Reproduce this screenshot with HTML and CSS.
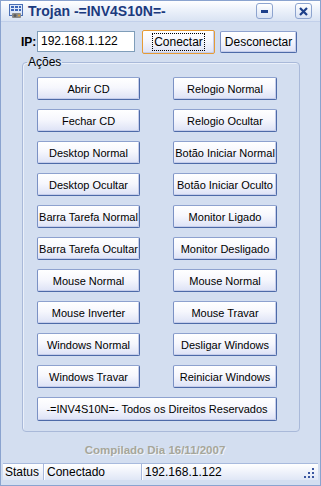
FILE: index.html
```html
<!DOCTYPE html>
<html lang="pt">
<head>
    <meta charset="UTF-8">
    <title>Trojan -=INV4S10N=-</title>
    <link rel="stylesheet" href="styles.css">
</head>
<body>
    <div class="window">
        <div class="titlebar">
            <svg class="app-icon" width="15" height="15" viewBox="0 0 15 15">
                <rect x="0.5" y="0.5" width="13" height="11" fill="#dfe8f8" stroke="#4a6fb5"/>
                <rect x="2" y="2" width="3" height="2" fill="#3d66b8"/>
                <rect x="6" y="2" width="3" height="2" fill="#3d66b8"/>
                <rect x="10" y="2" width="2" height="2" fill="#3d66b8"/>
                <rect x="2" y="5" width="3" height="2" fill="#3d66b8"/>
                <rect x="6" y="5" width="3" height="2" fill="#3d66b8"/>
                <rect x="10" y="5" width="2" height="2" fill="#3d66b8"/>
                <rect x="3" y="9" width="9" height="5" rx="1" fill="#8a8a8a"/>
                <circle cx="6" cy="11.5" r="1.5" fill="#5a5a5a"/>
                <circle cx="10" cy="11.5" r="1" fill="#e0a030"/>
            </svg>
            <span class="title">Trojan -=INV4S10N=-</span>
            <div class="title-buttons">
                <div class="tbtn"><svg width="8" height="8" viewBox="0 0 8 8"><rect x="0" y="3" width="7" height="3" fill="#1d3f8a"/></svg></div>
                <div class="tbtn"><svg width="9" height="9" viewBox="0 0 9 9"><path d="M1 1 L8 8 M8 1 L1 8" stroke="#1d3f8a" stroke-width="2.2"/></svg></div>
            </div>
        </div>

        <div class="content">
            <div class="ip-row">
                <span class="ip-label">IP:</span>
                <div class="ip-input">192.168.1.122</div>
                <button class="btn btn-focus"><span class="focus-rect">Conectar</span></button>
                <button class="btn btn-disc">Desconectar</button>
            </div>

            <fieldset class="group">
                <legend>Ações</legend>
                <div class="actions">
                    <button class="btn">Abrir CD</button>
                    <button class="btn">Relogio Normal</button>
                    <button class="btn">Fechar CD</button>
                    <button class="btn">Relogio Ocultar</button>
                    <button class="btn">Desktop Normal</button>
                    <button class="btn">Botão Iniciar Normal</button>
                    <button class="btn">Desktop Ocultar</button>
                    <button class="btn">Botão Iniciar Oculto</button>
                    <button class="btn">Barra Tarefa Normal</button>
                    <button class="btn">Monitor Ligado</button>
                    <button class="btn">Barra Tarefa Ocultar</button>
                    <button class="btn">Monitor Desligado</button>
                    <button class="btn">Mouse Normal</button>
                    <button class="btn">Mouse Normal</button>
                    <button class="btn">Mouse Inverter</button>
                    <button class="btn">Mouse Travar</button>
                    <button class="btn">Windows Normal</button>
                    <button class="btn">Desligar Windows</button>
                    <button class="btn">Windows Travar</button>
                    <button class="btn">Reiniciar Windows</button>
                </div>
                <button class="btn btn-wide">-=INV4S10N=- Todos os Direitos Reservados</button>
            </fieldset>

            <div class="compiled">Compilado Dia 16/11/2007</div>
        </div>

        <div class="statusbar">
            <div class="panel panel-status">Status</div>
            <div class="panel panel-conn">Conectado</div>
            <div class="panel panel-ip">192.168.1.122</div>
            <svg class="grip" width="11" height="11" viewBox="0 0 11 11">
                <rect x="8" y="0" width="2" height="2" fill="#3a56a0"/>
                <rect x="4" y="4" width="2" height="2" fill="#3a56a0"/>
                <rect x="8" y="4" width="2" height="2" fill="#3a56a0"/>
                <rect x="0" y="8" width="2" height="2" fill="#3a56a0"/>
                <rect x="4" y="8" width="2" height="2" fill="#3a56a0"/>
                <rect x="8" y="8" width="2" height="2" fill="#3a56a0"/>
            </svg>
        </div>
    </div>
</body>
</html>
```

FILE: styles.css
```css
body {
    margin: 0;
    font-family: "Liberation Sans", Arial, sans-serif;
    font-size: 11px;
    color: #000;
}
.window {
    width: 321px;
    height: 486px;
    box-sizing: border-box;
    border: 1px solid #8aa3cf;
    background-color: #d3def0;
    display: flex;
    flex-direction: column;
}
.titlebar {
    height: 20px;
    display: flex;
    align-items: center;
    padding-left: 8px;
    background: linear-gradient(to bottom, #ffffff 0%, #eef3fb 40%, #d9e3f3 100%);
    border-bottom: 1px solid #c2d0ea;
}
.app-icon {
    margin-right: 4px;
}
.title {
    font-weight: bold;
    font-size: 14px;
    color: #1b3a7e;
    flex: 1;
}
.title-buttons {
    display: flex;
    gap: 22px;
    margin-right: 8px;
}
.tbtn {
    width: 15px;
    height: 14px;
    border: 1px solid #8da4cf;
    border-radius: 3px;
    background: linear-gradient(to bottom, #ffffff, #d8e2f4);
    display: flex;
    align-items: center;
    justify-content: center;
}
.content {
    flex: 1;
    padding: 8px 0 0 20px;
}
.ip-row {
    display: flex;
    align-items: center;
    height: 23px;
}
.ip-label {
    font-weight: bold;
    font-size: 12px;
    width: 16px;
}
.ip-input {
    width: 93px;
    height: 19px;
    line-height: 19px;
    padding-left: 3px;
    background: #fff;
    border: 1px solid #7f9db9;
    font-size: 12px;
    margin-right: 7px;
}
.btn {
    font-family: "Liberation Sans", Arial, sans-serif;
    font-size: 11px;
    color: #000;
    height: 23px;
    padding: 0;
    border: 1px solid #4d6aa8;
    border-top-color: #8ea2cf;
    border-left-color: #7b91c4;
    border-radius: 2px;
    background: linear-gradient(to bottom, #ffffff 0%, #f6f7fd 45%, #dde2f6 100%);
    box-shadow: inset -1px -1px 0 #c5cdea;
}
.btn-focus {
    width: 73px;
    height: 24px;
    border: 1px solid #e69b35;
    margin-right: 5px;
    display: flex;
    align-items: center;
    justify-content: center;
}
.focus-rect {
    border: 1px dotted #000;
    padding: 1px 1px;
    font-size: 12px;
}
.btn-disc {
    width: 77px;
    height: 22px;
    font-size: 12px;
}
.group {
    width: 278px;
    height: 376px;
    box-sizing: border-box;
    margin: 3px 0 0 1px;
    padding: 9px 0 0 14px;
    border: 1px solid #a9b9d9;
    border-radius: 4px;
    box-shadow: inset 1px 1px 0 #eaf0fa;
}
.group legend {
    padding: 0 1px;
    margin-left: -10px;
    font-size: 12px;
    line-height: 12px;
}
.actions {
    display: grid;
    grid-template-columns: 103px 104px;
    column-gap: 33px;
    row-gap: 9px;
}
.btn-wide {
    width: 240px;
    height: 24px;
    margin-top: 9px;
}
.compiled {
    width: 268px;
    text-align: center;
    margin-top: 12px;
    font-weight: bold;
    font-size: 11.5px;
    color: #a6a69a;
    text-shadow: 1px 1px 0 #f1f4fa;
}
.statusbar {
    height: 16px;
    margin: 0 2px 5px 2px;
    display: flex;
    align-items: center;
    background: linear-gradient(to bottom, #ffffff, #dfe6f6);
    border-top: 1px solid #a8badd;
    font-size: 12px;
}
.panel {
    height: 100%;
    line-height: 16px;
    padding-left: 2px;
    border-right: 1px solid #a8b8dc;
    box-shadow: 1px 0 0 #ffffff;
}
.panel-status {
    width: 38px;
}
.panel-conn {
    width: 94px;
    padding-left: 3px;
}
.panel-ip {
    flex: 1;
    border-right: none;
    box-shadow: none;
    padding-left: 3px;
}
.grip {
    margin: 3px 3px 0 0;
}
```
